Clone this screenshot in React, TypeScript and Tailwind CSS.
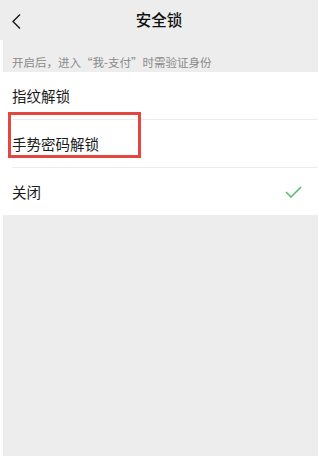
import React from "react";

const font = { fontFamily: '"Noto Sans CJK SC", "Noto Sans", sans-serif' };

export default function App() {
  return (
    <div className="relative w-[319px] h-[457px] bg-white overflow-hidden" style={font}>
      <div className="relative flex items-center justify-center w-[318px] h-[40px] bg-[#ededed]">
        <svg className="absolute left-[11px] top-[13px]" width="11" height="17" viewBox="0 0 11 17">
          <path d="M9 1.5 L2 8.5 L9 15.5" fill="none" stroke="#1a1a1a" strokeWidth="1.4" />
        </svg>
        <span className="text-[15.5px] font-medium text-[#111] leading-none">安全锁</span>
      </div>
      <div className="ml-[3px] w-[315px] h-[32px] bg-[#ededed] flex items-end pb-[4px] pl-[9px]">
        <span className="text-[11.5px] text-[#8a8a8a] leading-none">开启后，进入“我-支付”时需验证身份</span>
      </div>
      <div className="w-[318px] bg-white">
        <div className="h-[47px] flex items-center pl-[12px] text-[14.5px] text-[#1a1a1a]">指纹解锁</div>
        <div className="ml-[12px] h-px bg-[#ececec]" />
        <div className="h-[47px] flex items-center pl-[12px] text-[14.5px] text-[#1a1a1a]">手势密码解锁</div>
        <div className="ml-[12px] h-px bg-[#ececec]" />
        <div className="h-[47px] flex items-center justify-between pl-[12px] pr-[16px] text-[14.5px] text-[#1a1a1a]">
          <span>关闭</span>
          <svg width="17" height="12" viewBox="0 0 17 12">
            <path d="M1 6 L6 11 L16 1" fill="none" stroke="#4cbf6b" strokeWidth="1.5" />
          </svg>
        </div>
      </div>
      <div className="ml-[3px] w-[315px] h-[241px] bg-[#ededed]" />
      <div className="absolute left-[8px] top-[112px] w-[133px] h-[46px] border-[3px] border-[#e5463f]" />
    </div>
  );
}
